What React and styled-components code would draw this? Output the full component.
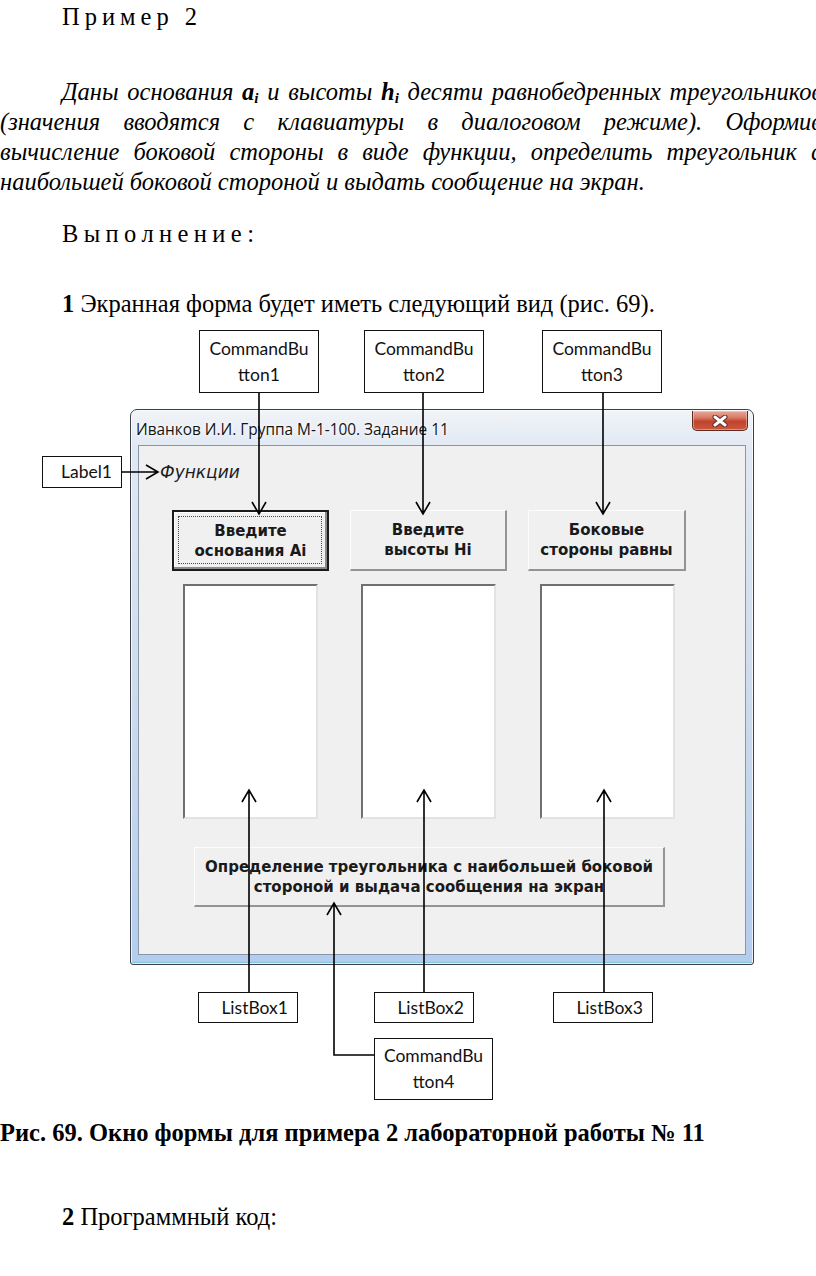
import React from 'react';
import styled, { createGlobalStyle, css } from 'styled-components';

const GlobalStyle = createGlobalStyle`
  html, body {
    margin: 0;
    padding: 0;
    background: #fff;
    overflow-x: hidden;
  }
  #root {
    width: 816px;
  }
`;

const Page = styled.div`
  width: 816px;
  overflow: hidden;
  padding-top: 2px;
  color: #000;
  font-family: "Liberation Serif", "Times New Roman", serif;
  font-size: 24.5px;
`;

const Spaced = styled.div`
  margin: ${(p) => p.$top}px 0 0 62px;
  line-height: 30px;
  letter-spacing: ${(p) => p.$spacing}px;
  white-space: pre;
`;

const Para = styled.div`
  margin-top: 45px;
  width: 822px;
  font-style: italic;
  line-height: 30px;
`;

const ParaLine = styled.div`
  padding-left: ${(p) => (p.$indent ? 62 : 0)}px;
  text-align: ${(p) => (p.$justify ? 'justify' : 'left')};
  text-align-last: ${(p) => (p.$justify ? 'justify' : 'auto')};
`;

const Term = styled.b`
  font-weight: bold;
  sub {
    font-size: 15px;
    line-height: 0;
    vertical-align: -3px;
  }
`;

const Item = styled.div`
  margin: ${(p) => p.$top}px 0 0 ${(p) => p.$left}px;
  line-height: 30px;
  font-weight: ${(p) => (p.$bold ? 'bold' : 'normal')};
  white-space: nowrap;
`;

const Figure = styled.div`
  position: relative;
  box-sizing: border-box;
  height: 780px;
  margin-top: 6px;
  padding: 84px 0 0 130px;
`;

const Callout = styled.div`
  position: absolute;
  left: ${(p) => p.$x}px;
  top: ${(p) => p.$y}px;
  width: ${(p) => p.$w}px;
  height: ${(p) => p.$h}px;
  box-sizing: border-box;
  z-index: 2;
  display: flex;
  flex-direction: column;
  justify-content: center;
  align-items: ${(p) => (p.$end ? 'flex-end' : 'center')};
  padding: 0 9px;
  border: 1.5px solid #111;
  background: #fff;
  color: #111;
  font-family: Lato, "Open Sans", sans-serif;
  font-size: 17.5px;
  line-height: 26px;
`;

const Connectors = styled.svg`
  position: absolute;
  left: 0;
  top: 0;
  z-index: 3;
  pointer-events: none;
  overflow: visible;
`;

const Window = styled.div`
  position: relative;
  z-index: 1;
  box-sizing: border-box;
  width: 624px;
  height: 556px;
  display: flex;
  flex-direction: column;
  padding: 0 7px 9px 7px;
  border: 1px solid #3b404a;
  border-radius: 7px 7px 3px 3px;
  background: linear-gradient(180deg, #f1f4f8 0%, #e0e8f2 7%, #cbdaec 55%, #b3cdee 100%);
  box-shadow: inset 0 0 0 1px rgba(255, 255, 255, 0.75), inset 0 -2px 0 #86c6dc;
`;

const TitleBar = styled.div`
  flex: none;
  height: 35px;
  display: flex;
  justify-content: space-between;
  align-items: flex-start;
`;

const Title = styled.div`
  margin: 10px 0 0 -2px;
  font-family: "Open Sans", "Noto Sans", sans-serif;
  font-size: 15.4px;
  line-height: 20px;
  color: #141414;
  text-shadow: 0 0 6px #fff, 0 0 3px #fff;
`;

const CloseButton = styled.div`
  width: 56px;
  height: 20px;
  margin: 1px -2px 0 0;
  box-sizing: border-box;
  display: flex;
  align-items: center;
  justify-content: center;
  border: 1px solid #5f2a20;
  border-top: none;
  border-radius: 0 0 5px 5px;
  background: linear-gradient(180deg, #e9a99b 0%, #d77a66 35%, #c2432c 55%, #cc5740 100%);
  box-shadow: inset 0 0 0 1px rgba(255, 220, 210, 0.45);
`;

const Client = styled.div`
  flex: 1;
  border: 1px solid #8896a8;
  background: #f0f0f0;
`;

const FormLabel = styled.div`
  margin: 16px 0 0 21px;
  font-family: "DejaVu Sans", Tahoma, sans-serif;
  font-style: italic;
  font-size: 17px;
  line-height: 20px;
  color: #1c1c1c;
`;

const ControlGrid = styled.div`
  display: grid;
  grid-template-columns: 157px 157px 158px;
  column-gap: 21px;
  margin: ${(p) => p.$top}px 0 0 33px;
`;

const buttonText = css`
  box-sizing: border-box;
  display: flex;
  align-items: center;
  justify-content: center;
  text-align: center;
  font-family: "DejaVu Sans", Tahoma, sans-serif;
  font-weight: bold;
  font-size: 15px;
  line-height: 20px;
  color: #1a1a1a;
  background: #f0f0f0;
  border-top: 1px solid #fcfcfc;
  border-left: 1px solid #fcfcfc;
  border-right: 2px solid #949494;
  border-bottom: 2px solid #949494;
`;

const FormButton = styled.div`
  ${buttonText}
  position: relative;
  height: 61px;
  ${(p) =>
    p.$focused &&
    css`
      border: 2px solid #1a1a1a;
      box-shadow: inset -2px -2px 0 #8a8a8a, inset 1px 1px 0 #fff;
      &::after {
        content: '';
        position: absolute;
        inset: 4px 5px 5px 4px;
        border: 1px dotted #4a4a4a;
      }
    `}
`;

const ListBox = styled.div`
  justify-self: center;
  width: 135px;
  height: 235px;
  box-sizing: border-box;
  background: #fff;
  border-top: 2px solid #707070;
  border-left: 2px solid #707070;
  border-right: 2px solid #e3e3e3;
  border-bottom: 2px solid #e3e3e3;
`;

const WideButton = styled.div`
  ${buttonText}
  width: 471px;
  height: 60px;
  margin: 28px 0 0 55px;
`;

const CloseGlyph = () => (
  <svg width="16" height="12" viewBox="0 0 16 12">
    <path d="M3 2 L13 10 M13 2 L3 10" stroke="#5b2a22" strokeWidth="5" strokeLinecap="round" />
    <path d="M3 2 L13 10 M13 2 L3 10" stroke="#fff" strokeWidth="3" strokeLinecap="round" />
  </svg>
);

const down = (x, y1, y2) => `M${x} ${y1} V${y2} M${x - 7} ${y2 - 12} L${x} ${y2} L${x + 7} ${y2 - 12}`;
const up = (x, y1, y2) => `M${x} ${y1} V${y2} M${x - 7} ${y2 + 12} L${x} ${y2} L${x + 7} ${y2 + 12}`;

const links = [
  down(259, 68, 189),
  down(423, 68, 189),
  down(603, 68, 189),
  'M122 147 H158 M146 140 L158 147 L146 154',
  up(249, 667, 465),
  up(424, 667, 465),
  up(604, 667, 465),
  'M374 730 H334 V578 M327 590 L334 578 L341 590',
];

const topCallouts = [
  { x: 199, n: 1 },
  { x: 364, n: 2 },
  { x: 542, n: 3 },
];

const listCallouts = [
  { x: 198, n: 1 },
  { x: 374, n: 2 },
  { x: 553, n: 3 },
];

export default function App() {
  return (
    <>
      <GlobalStyle />
      <Page>
        <Spaced $top={0} $spacing={5}>
          {'Пример 2'}
        </Spaced>

        <Para>
          <ParaLine $indent $justify>
            Даны основания{' '}
            <Term>
              a<sub>i</sub>
            </Term>{' '}
            и высоты{' '}
            <Term>
              h<sub>i</sub>
            </Term>{' '}
            десяти равнобедренных треугольников
          </ParaLine>
          <ParaLine $justify>
            (значения вводятся с клавиатуры в диалоговом режиме). Оформив
          </ParaLine>
          <ParaLine $justify>
            вычисление боковой стороны в виде функции, определить треугольник с
          </ParaLine>
          <ParaLine>наибольшей боковой стороной и выдать сообщение на экран.</ParaLine>
        </Para>

        <Spaced $top={22} $spacing={5.4}>
          {'Выполнение:'}
        </Spaced>

        <Item $top={40} $left={62}>
          <b>1</b> Экранная форма будет иметь следующий вид (рис. 69).
        </Item>

        <Figure>
          {topCallouts.map((c) => (
            <Callout key={c.n} $x={c.x} $y={5} $w={120} $h={63}>
              <span>CommandBu</span>
              <span>tton{c.n}</span>
            </Callout>
          ))}
          <Callout $x={42} $y={131} $w={80} $h={32} $end>
            Label1
          </Callout>
          {listCallouts.map((c) => (
            <Callout key={c.n} $x={c.x} $y={667} $w={100} $h={31} $end>
              ListBox{c.n}
            </Callout>
          ))}
          <Callout $x={374} $y={713} $w={119} $h={62}>
            <span>CommandBu</span>
            <span>tton4</span>
          </Callout>

          <Window>
            <TitleBar>
              <Title>Иванков И.И. Группа М-1-100. Задание 11</Title>
              <CloseButton>
                <CloseGlyph />
              </CloseButton>
            </TitleBar>
            <Client>
              <FormLabel>Функции</FormLabel>
              <ControlGrid $top={28}>
                <FormButton $focused>
                  Введите
                  <br />
                  основания Ai
                </FormButton>
                <FormButton>
                  Введите
                  <br />
                  высоты Hi
                </FormButton>
                <FormButton>
                  Боковые
                  <br />
                  стороны равны
                </FormButton>
              </ControlGrid>
              <ControlGrid $top={13}>
                <ListBox />
                <ListBox />
                <ListBox />
              </ControlGrid>
              <WideButton>
                Определение треугольника с наибольшей боковой
                <br />
                стороной и выдача сообщения на экран
              </WideButton>
            </Client>
          </Window>

          <Connectors width="816" height="780" viewBox="0 0 816 780">
            {links.map((d, i) => (
              <path key={i} d={d} fill="none" stroke="#000" strokeWidth="1.6" />
            ))}
          </Connectors>
        </Figure>

        <Item $top={13} $left={0} $bold>
          Рис. 69. Окно формы для примера 2 лабораторной работы № 11
        </Item>

        <Item $top={54} $left={62}>
          <b>2</b> Программный код:
        </Item>
      </Page>
    </>
  );
}
